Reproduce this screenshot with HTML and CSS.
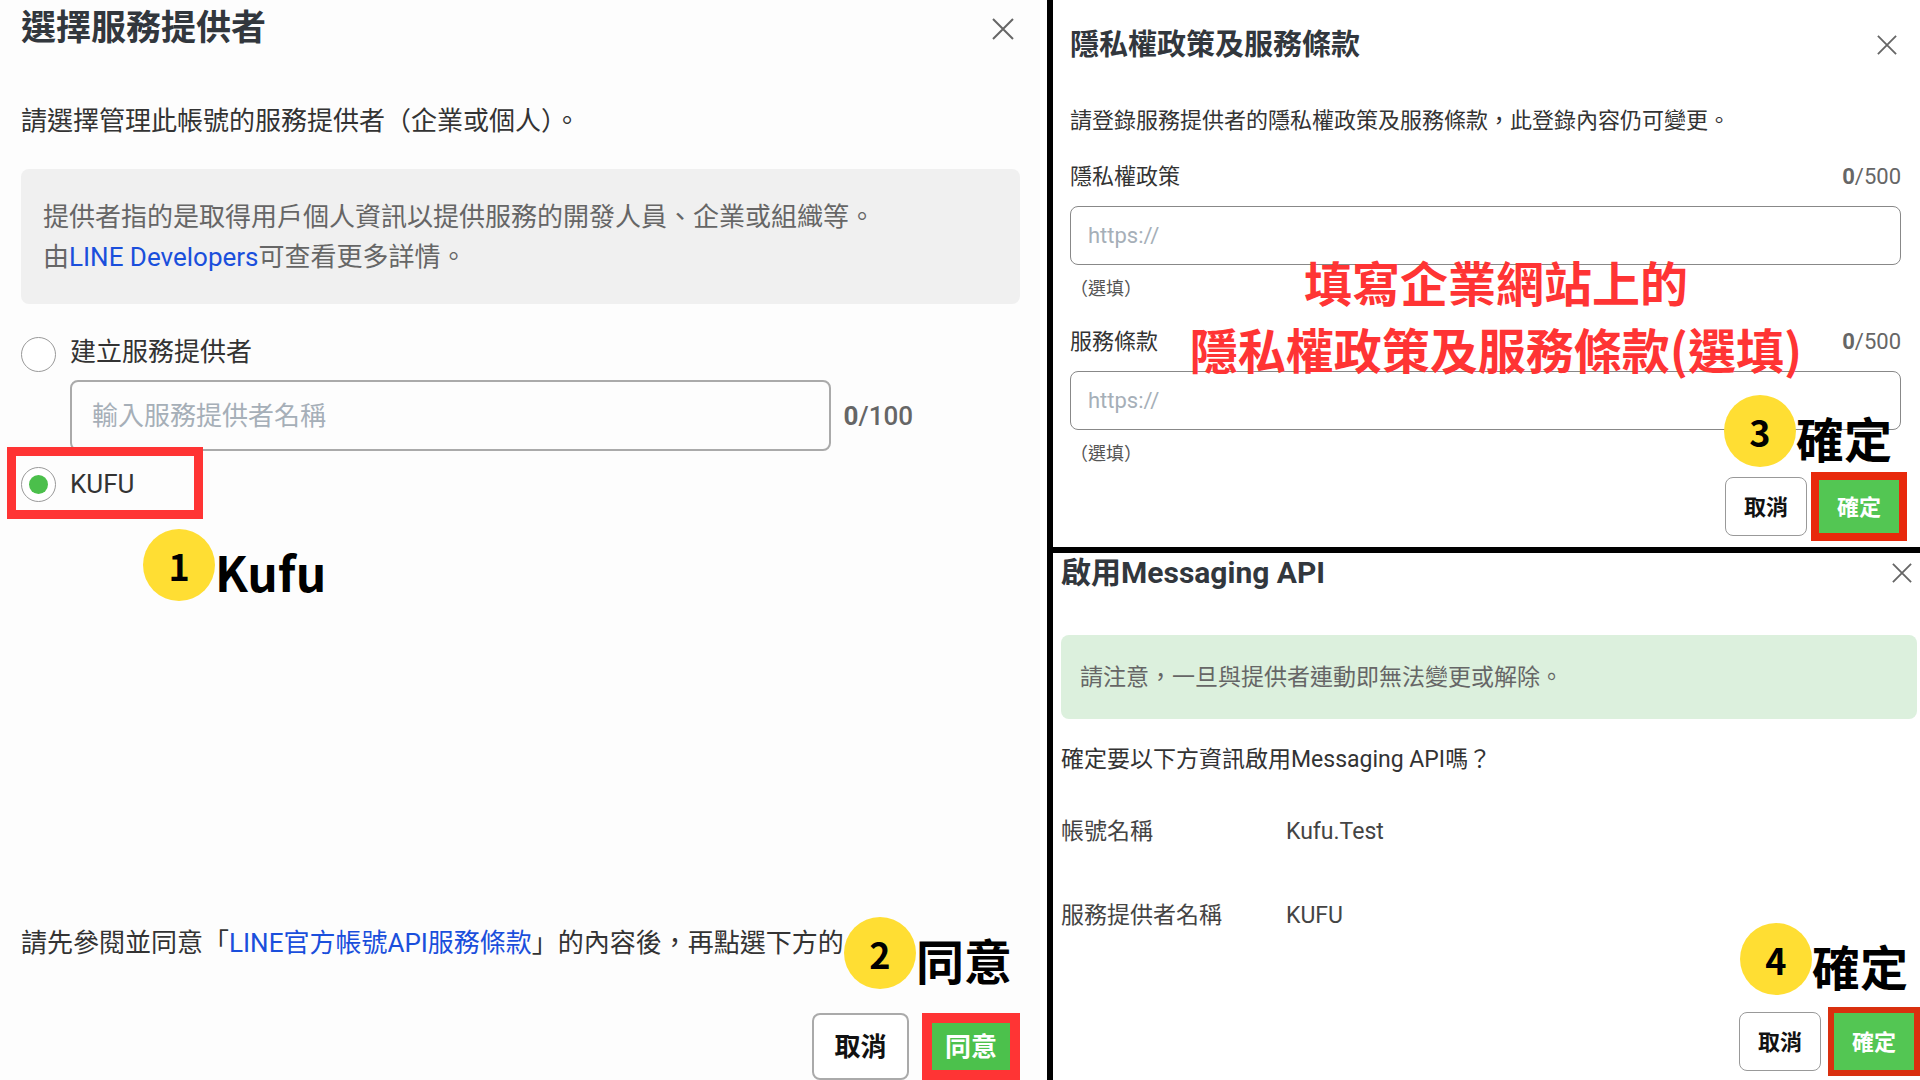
FILE: index.html
```html
<!DOCTYPE html>
<html lang="zh-Hant">
<head>
    <meta charset="UTF-8">
    <meta name="viewport" content="width=device-width, initial-scale=1.0">
    <title>啟用Messaging API</title>
    <link rel="stylesheet" href="styles.css">
</head>
<body>
    <main class="guide">
        <!-- Provider selection -->
        <section class="panel panel-provider">
            <header class="panel-header">
                <h1 class="panel-title">選擇服務提供者</h1>
                <button type="button" class="close-btn" aria-label="關閉">
                    <svg class="close-icon" viewBox="0 0 22 22"><path d="M1 1 L21 21 M21 1 L1 21"/></svg>
                </button>
            </header>

            <p class="lead">請選擇管理此帳號的服務提供者（企業或個人）。</p>

            <div class="notice">
                提供者指的是取得用戶個人資訊以提供服務的開發人員、企業或組織等。<br>
                由<a href="#">LINE Developers</a>可查看更多詳情。
            </div>

            <div class="option option-new">
                <input type="radio" class="radio" name="provider" id="provider-new">
                <label for="provider-new">建立服務提供者</label>
            </div>
            <div class="new-provider">
                <input type="text" class="text-input" placeholder="輸入服務提供者名稱" aria-label="服務提供者名稱">
                <span class="counter"><b>0</b>/100</span>
            </div>
            <div class="option">
                <input type="radio" class="radio" name="provider" id="provider-kufu" checked>
                <label for="provider-kufu">KUFU</label>
                <span class="frame"></span>
                <div class="step step-1"><span class="step-number">1</span><span class="step-text">Kufu</span></div>
            </div>

            <p class="agreement">請先參閱並同意「<a href="#">LINE官方帳號API服務條款</a>」的內容後，再點選下方的</p>
            <footer class="actions">
                <button type="button" class="btn">取消</button>
                <button type="button" class="btn btn-primary">同意</button>
                <div class="step step-2"><span class="step-number">2</span><span class="step-text">同意</span></div>
            </footer>
        </section>

        <!-- Privacy policy and terms -->
        <section class="panel panel-terms">
            <header class="panel-header">
                <h2 class="panel-title">隱私權政策及服務條款</h2>
                <button type="button" class="close-btn" aria-label="關閉">
                    <svg class="close-icon" viewBox="0 0 22 22"><path d="M1 1 L21 21 M21 1 L1 21"/></svg>
                </button>
            </header>

            <p class="lead">請登錄服務提供者的隱私權政策及服務條款，此登錄內容仍可變更。</p>

            <div class="field">
                <div class="field-head">
                    <label for="privacy-url">隱私權政策</label>
                    <span class="counter"><b>0</b>/500</span>
                </div>
                <input type="url" class="text-input" id="privacy-url" placeholder="https://">
                <p class="hint">（選填）</p>
            </div>
            <div class="field">
                <div class="field-head">
                    <label for="terms-url">服務條款</label>
                    <span class="counter"><b>0</b>/500</span>
                </div>
                <input type="url" class="text-input" id="terms-url" placeholder="https://">
                <p class="hint">（選填）</p>
            </div>
            <p class="note">填寫企業網站上的<br>隱私權政策及服務條款(選填)</p>

            <footer class="actions">
                <button type="button" class="btn">取消</button>
                <button type="button" class="btn btn-primary">確定</button>
                <div class="step step-3"><span class="step-number">3</span><span class="step-text">確定</span></div>
            </footer>
        </section>

        <!-- Final confirmation -->
        <section class="panel panel-confirm">
            <header class="panel-header">
                <h2 class="panel-title">啟用Messaging API</h2>
                <button type="button" class="close-btn" aria-label="關閉">
                    <svg class="close-icon" viewBox="0 0 22 22"><path d="M1 1 L21 21 M21 1 L1 21"/></svg>
                </button>
            </header>

            <div class="notice">請注意，一旦與提供者連動即無法變更或解除。</div>
            <p class="question">確定要以下方資訊啟用Messaging API嗎？</p>

            <dl class="summary">
                <dt>帳號名稱</dt>
                <dd>Kufu.Test</dd>
                <dt>服務提供者名稱</dt>
                <dd>KUFU</dd>
            </dl>

            <footer class="actions">
                <button type="button" class="btn">取消</button>
                <button type="button" class="btn btn-primary">確定</button>
                <div class="step step-4"><span class="step-number">4</span><span class="step-text">確定</span></div>
            </footer>
        </section>
    </main>
</body>
</html>
```

FILE: styles.css
```css
* {
    box-sizing: border-box;
}
body {
    margin: 0;
    background: #000;
    color: #333;
    font-family: Roboto, "Noto Sans CJK TC", sans-serif;
}
h1, h2, p, dl, dd {
    margin: 0;
}
a {
    color: #1a4fdc;
    text-decoration: none;
}
button, input {
    font-family: inherit;
}

.guide {
    display: grid;
    grid-template-columns: 1047fr 867fr;
    grid-template-rows: auto 1fr;
    gap: 6px;
    min-height: 100vh;
}
.panel {
    position: relative;
    display: flex;
    flex-direction: column;
    background: #fff;
    font-size: 22px;
    line-height: 32px;
}
.panel-header {
    display: flex;
    justify-content: space-between;
    align-items: center;
}
.panel-title {
    font-size: 29px;
    line-height: 40px;
    font-weight: 700;
    color: #32373d;
}
.close-btn {
    display: flex;
    padding: 0;
    border: none;
    background: none;
    cursor: pointer;
}
.close-icon {
    width: 20px;
    height: 20px;
    fill: none;
    stroke: #666;
    stroke-width: 2;
}
.notice {
    border-radius: 8px;
    color: #666;
}
.counter {
    color: #666;
}
.text-input {
    width: 100%;
    height: 59px;
    padding: 0 17px;
    border: 1px solid #888;
    border-radius: 8px;
    background: transparent;
    color: #333;
    font-size: 22px;
}
.text-input::placeholder {
    color: #a6afb8;
    opacity: 1;
}

/* Buttons */
.actions {
    position: relative;
    display: flex;
    justify-content: flex-end;
    align-items: center;
}
.btn {
    height: 59px;
    min-width: 82px;
    padding: 0 0 4px;
    border: 1px solid #999;
    border-radius: 8px;
    background: #fff;
    color: #111;
    font-size: 22px;
    font-weight: 700;
    cursor: pointer;
}
.btn-primary {
    height: 69px;
    min-width: 96px;
    border: 8px solid #e8290b;
    border-radius: 0;
    background: #53c653;
    color: #fff;
}

/* Numbered steps drawn over the dialogs */
.step {
    position: absolute;
    display: flex;
    align-items: center;
    color: #000;
    font-family: "Noto Sans CJK TC", sans-serif;
    font-weight: 700;
    white-space: nowrap;
    pointer-events: none;
}
.step-number {
    width: 72px;
    height: 72px;
    border-radius: 50%;
    background: #ffde33;
    font-size: 36px;
    line-height: 72px;
    text-align: center;
}
.step-text {
    padding-top: 12px;
    font-size: 48px;
    line-height: 54px;
}
.step-1 {
    top: 65px;
    left: 122px;
}
.step-2 {
    top: -96px;
    right: 8px;
}
.step-3 {
    top: -77px;
    right: 15px;
}
.step-4 {
    top: -84px;
    right: 12px;
}

/* Left dialog */
.panel-provider {
    grid-row: 1 / 3;
    padding: 5px 27px 0 21px;
    background: #fdfdfd;
    font-size: 26px;
    line-height: 40px;
}
.panel-provider .panel-title {
    font-size: 35px;
    line-height: 48px;
}
.panel-provider .close-btn {
    margin-right: 6px;
}
.panel-provider .close-icon {
    width: 22px;
    height: 22px;
}
.panel-provider .lead {
    margin: 48px 0 28px;
}
.panel-provider .notice {
    margin-bottom: 28px;
    padding: 28px 22px 27px;
    background: #f0f0f0;
}
.option {
    position: relative;
    display: flex;
    align-items: center;
    gap: 14px;
}
.option-new {
    align-items: flex-end;
}
.radio {
    display: grid;
    place-content: center;
    width: 35px;
    height: 35px;
    margin: 0;
    border: 1px solid #999;
    border-radius: 50%;
    background: #fff;
    appearance: none;
}
.radio:checked::before {
    content: "";
    width: 19px;
    height: 19px;
    border-radius: 50%;
    background: #4bbf4b;
}
.frame {
    position: absolute;
    top: -17px;
    left: -14px;
    width: 196px;
    height: 72px;
    border: 9px solid #ff3434;
    pointer-events: none;
}
.new-provider {
    display: flex;
    align-items: center;
    gap: 13px;
    margin: 8px 107px 13px 49px;
}
.new-provider .text-input {
    flex: 1;
    height: 71px;
    padding: 0 20px;
    border: 2px solid #aaa;
    font-size: 26px;
}
.new-provider .counter {
    font-weight: 500;
}
.agreement {
    margin-top: auto;
}
.panel-provider .actions {
    gap: 13px;
    margin-top: 50px;
}
.panel-provider .btn {
    height: 67px;
    min-width: 97px;
    border: 2px solid #aaa;
    font-size: 26px;
}
.panel-provider .btn-primary {
    min-width: 98px;
    border: 10px solid #ff3434;
    background: #4cc14c;
}

/* Top right dialog */
.panel-terms {
    padding: 25px 19px 6px 17px;
}
.panel-terms .close-btn {
    margin-right: 4px;
}
.panel-terms .lead {
    margin: 40px 0 24px;
}
.field {
    margin-bottom: 25px;
}
.field-head {
    display: flex;
    justify-content: space-between;
    margin-bottom: 13px;
}
.hint {
    margin-top: 12px;
    color: #555;
    font-size: 18px;
    line-height: 24px;
}
.note {
    position: absolute;
    top: 248px;
    left: 19px;
    right: 0;
    color: #ff3434;
    font-family: "Noto Sans CJK TC", sans-serif;
    font-size: 48px;
    font-weight: 700;
    line-height: 67px;
    text-align: center;
    pointer-events: none;
}
.panel-terms .actions {
    gap: 4px;
    margin: -19px -6px 0 0;
}

/* Bottom right dialog */
.panel-confirm {
    padding: 0 3px 4px 8px;
    font-size: 23px;
}
.panel-confirm .panel-title {
    font-size: 30px;
}
.panel-confirm .close-btn {
    margin-right: 5px;
}
.panel-confirm .notice {
    margin: 42px 0 25px;
    padding: 27px 19px 25px;
    background: #dcf0dd;
}
.summary {
    display: grid;
    grid-template-columns: 225px 1fr;
    row-gap: 52px;
    margin-top: 40px;
    color: #444;
}
.panel-confirm .actions {
    gap: 7px;
    margin: auto -3px 0 0;
}
.panel-confirm .btn-primary {
    min-width: 92px;
    border: 6px solid #d9300f;
}
```
